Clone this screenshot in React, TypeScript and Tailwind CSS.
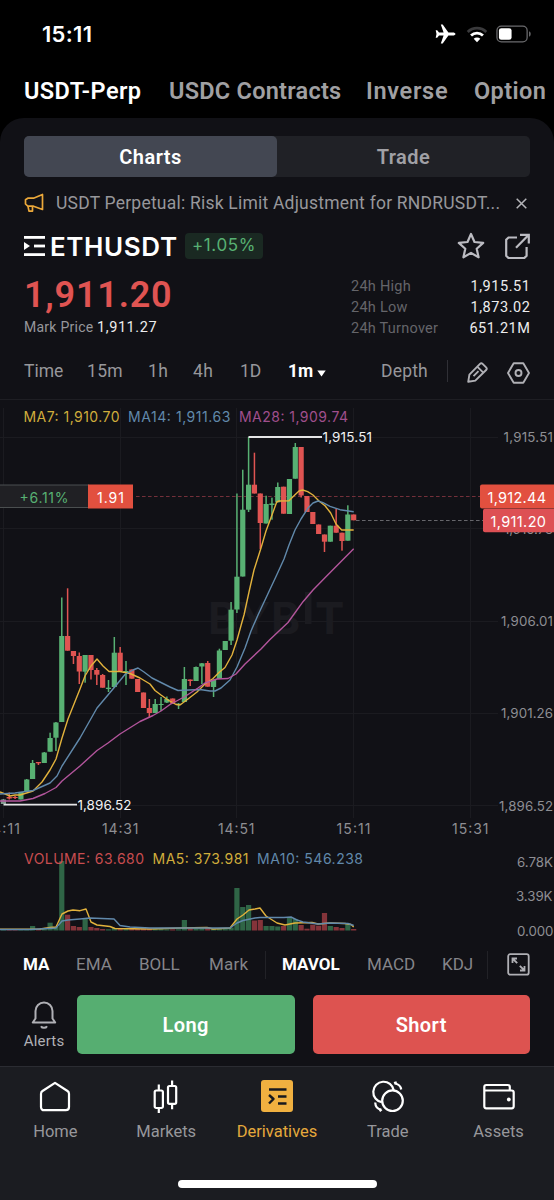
import React from 'react';
import clsx from 'clsx';

const GREEN = '#58b173';
const RED = '#e05452';
const YELLOW = '#e2b23c';
const BLUE = '#6189ab';
const PURPLE = '#b3559c';

// [open side, wick high, body top, body bottom, wick low, volume top]
type Candle = ['u' | 'd', number, number, number, number, number];

const candles: Candle[] = [
  ['u', 799, 799.5, 804, 804, 929.5],
  ['d', 792.5, 797, 798.5, 799.5, 929.5],
  ['d', 796, 797, 798, 799, 929.5],
  ['u', 792, 792, 799.5, 799.5, 929],
  ['u', 779, 779.5, 792, 792, 929],
  ['u', 760, 763, 779, 779, 926],
  ['d', 762, 762, 763.3, 765, 929],
  ['u', 752, 752.5, 763, 763, 928.5],
  ['u', 732.7, 738, 751.7, 751.7, 922.7],
  ['u', 722, 722.5, 737.7, 751, 927],
  ['u', 597.5, 636, 722, 722, 861],
  ['d', 588.3, 636, 650.7, 650.7, 914.7],
  ['d', 651, 651, 656, 664, 926],
  ['d', 652.5, 656, 671.5, 684, 927],
  ['u', 655, 655, 671.7, 682.7, 918.7],
  ['d', 655, 655, 670, 679.5, 927],
  ['d', 668, 670, 674.7, 685, 928],
  ['d', 674, 675, 687.7, 687.7, 929],
  ['u', 680, 687.7, 689, 692, 929.3],
  ['u', 637, 652.7, 687, 688, 928],
  ['d', 647, 652.7, 671, 671, 929],
  ['u', 661, 671, 672.7, 685, 929],
  ['d', 669.5, 669.5, 678.7, 678.7, 929],
  ['d', 679, 679, 692, 692, 929],
  ['d', 692.5, 692.5, 708, 708, 928.5],
  ['d', 699, 708, 713, 717.5, 928.7],
  ['u', 699, 704, 713, 713, 929],
  ['u', 697, 704, 705, 711, 929],
  ['u', 696.5, 699, 702.5, 703, 929.3],
  ['d', 698.5, 698.5, 703.7, 703.7, 929.3],
  ['u', 703, 703.7, 705, 709, 929.3],
  ['u', 667, 679, 702, 702, 920],
  ['d', 679.5, 679.5, 681, 686, 928.5],
  ['u', 666.5, 667, 681, 681, 928.5],
  ['u', 663, 663.3, 666.5, 684, 928.5],
  ['d', 661, 663, 686.7, 686.7, 927.5],
  ['u', 679.5, 679.5, 687, 697, 929],
  ['u', 648.7, 650.5, 679, 679, 928.5],
  ['u', 641, 641, 650, 650, 929],
  ['u', 602, 609.7, 640.7, 645, 927.5],
  ['u', 493.5, 576.7, 609.5, 613, 888],
  ['u', 469.7, 509.7, 576.5, 576.5, 907],
  ['u', 437, 484.7, 509.7, 512, 905],
  ['d', 452.7, 484.7, 493.5, 493.5, 920.5],
  ['d', 493.5, 493.5, 523, 549, 920],
  ['u', 495.7, 504, 523.5, 523.5, 926],
  ['u', 497.7, 503.5, 505, 519.7, 926],
  ['u', 482.5, 487, 502.3, 502.3, 926.5],
  ['d', 486.7, 486.7, 513.7, 513.7, 926],
  ['u', 479, 479, 514, 514, 917],
  ['u', 443, 447, 478.7, 478.7, 919],
  ['d', 447, 447, 495.5, 497.5, 925],
  ['d', 496, 496, 512, 512, 928.7],
  ['d', 512, 512, 524, 524, 924.7],
  ['d', 524.5, 524.5, 534, 534, 925.7],
  ['d', 534.5, 534.5, 541.7, 552, 913],
  ['u', 525.7, 525.7, 541.7, 541.7, 926],
  ['d', 509, 525.7, 532.7, 532.7, 927],
  ['d', 532.7, 532.7, 541, 550.7, 928],
  ['u', 505.3, 514.5, 540.7, 540.7, 924],
  ['d', 514.5, 514.5, 520.3, 520.3, 929],
];

const candleX = (i: number) => 3.4 + i * 5.838;

const ma7 =
  '0,792 10,796 15,795 20,795 33,791 42,782 50,770 56,759 62,738 68,719 74,704 80,689 85,676 91,666 97,659 103,666 109,671.5 120,671.5 130,673.5 140,678 150,684 155,690.5 161,695 168,700 176,704.5 180,705 188,699 197,692 205,684 213,678.5 219,672.5 225,667.5 232,655 237,640 242,622 244,615 249,592 254,570 261,548 266,531 272.7,513 276.7,502 279,501 289,500.7 295,494.7 299,491 302.7,490 307.7,491.7 313,495 319,501 325,505.7 330.7,513 336,524 341.7,530 353.7,530';
const ma14 =
  '0,794 15,793 33,790.5 50,783 57,776 62,766 80,738 97,708 113,689 125,674.5 133,670 138,668 144,672 152,678 162,683 170,687 178,690.5 200,689.5 210,691 215,691 221,688 230,680 237,667 245,648 251,631 258,615 276.7,575 284,559 289,545 295,530 301,519 308,508 313,503 318,501 323,502.7 330,506.3 340,509.7 353.7,511.7';
const ma28 =
  '0,801 20,801 33,798.5 45,793.5 56,787.5 62,781 80,766 97,750.5 108,743 120,734 140,721.5 153,715.5 161,711 170,704.5 185,696.5 198,688 205,683 217,679 228,678.5 236,674 245,664 261,649 270,639.5 288,622.5 303,601.7 313,590 326.7,576 353.7,548.7';
const volMa5 =
  '0,929.3 40,929 50,927.5 56,927 62,914 68,911 73,910 80,910.7 86,909 91,922 97,925 110,926.5 115,928.5 150,929 180,928 207,927.5 213,929 230,928 237,919 243,915 249,910 255,909 260,908 266,916 277,923 285,925 295,923 312,922.5 318,924 330,923 345,923.5 351,924.5 353.7,927';
const volMa10 =
  '0,929.5 30,929.5 56,928 62,921 68,920 80,919 90,918 114,919 120,925.5 130,927 150,928 230,928 237,923 243,920.5 255,918 260,917.5 284,917.5 291,917 297,920 303,922 318,924 330,923 348,923.5 353.7,925.5';

interface LabelProps {
  x: number;
  y: number;
  w: number;
  size?: number;
  fill?: string;
  children: string;
}

function Label({ x, y, w, size = 14, fill = '#8e8e93', children }: LabelProps) {
  return (
    <text x={x} y={y} textLength={w} fontSize={size} fill={fill}>
      {children}
    </text>
  );
}

function PriceChart() {
  return (
    <svg
      viewBox="0 400 554 540"
      className="block h-[540px] w-full font-['Inter',sans-serif]"
    >
      {/* grid */}
      <g stroke="#1b1b20" strokeWidth="1">
        {[3.5, 120.5, 236.5, 353.5, 470.5].map(x => (
          <line key={x} x1={x} x2={x} y1="408" y2="818" />
        ))}
        {[437.5, 528.5, 621.5, 713.5, 805.5].map(y => (
          <line key={y} x1="0" x2="498" y1={y} y2={y} />
        ))}
      </g>

      {/* watermark */}
      <g fill="#1b1b20" fontWeight="700" fontSize="44">
        <text x="208" y="634" textLength="92">
          BYB
        </text>
        <rect x="305" y="592" width="6.5" height="32" />
        <text x="315" y="634" textLength="28">
          T
        </text>
      </g>

      {/* price lines */}
      <line x1="136" x2="480" y1="496.5" y2="496.5" stroke="#74303a" strokeDasharray="3.6 2.4" />
      <line x1="356" x2="484" y1="520.5" y2="520.5" stroke="#66666b" strokeDasharray="3.6 2.4" />

      {/* volume bars */}
      {candles.map(([side, , , , , top], i) => (
        <rect
          key={i}
          x={candleX(i) - 2.6}
          y={top}
          width="5.2"
          height={930.5 - top}
          fill={side === 'u' ? '#2f6546' : '#84343a'}
        />
      ))}

      {/* candles */}
      {candles.map(([side, high, top, bottom, low], i) => (
        <g key={i} fill={i === 0 ? '#7f9a8d' : side === 'u' ? GREEN : RED}>
          <rect x={candleX(i) - 0.75} y={high} width="1.5" height={low - high} />
          <rect x={candleX(i) - 2.6} y={top} width="5.2" height={bottom - top} />
        </g>
      ))}

      <g fill="none" strokeWidth="1.4" strokeLinejoin="round">
        <polyline points={ma7} stroke={YELLOW} />
        <polyline points={ma14} stroke={BLUE} />
        <polyline points={ma28} stroke={PURPLE} />
        <polyline points={volMa5} stroke={YELLOW} />
        <polyline points={volMa10} stroke={BLUE} />
      </g>

      {/* high and low markers */}
      <line x1="248.5" x2="322" y1="437" y2="437" stroke="#e4e4e6" strokeWidth="1.8" />
      <line x1="3.5" x2="77" y1="804.7" y2="804.7" stroke="#e4e4e6" strokeWidth="1.8" />
      <Label x={322.5} y={442.4} w={49.5} size={13.5} fill="#f2f2f3">1,915.51</Label>
      <Label x={77.5} y={810.4} w={54} size={13.5} fill="#f2f2f3">1,896.52</Label>

      <Label x={23.5} y={422.3} w={96} fill="#d0ad3c">MA7: 1,910.70</Label>
      <Label x={128} y={422.3} w={102.5} fill={BLUE}>MA14: 1,911.63</Label>
      <Label x={239} y={422.3} w={109} fill="#a04f8d">MA28: 1,909.74</Label>
      <Label x={24} y={864.2} w={120} fill="#c84d50">VOLUME: 63.680</Label>
      <Label x={152.5} y={864.2} w={96} fill="#d0ad3c">MA5: 373.981</Label>
      <Label x={257} y={864.2} w={106} fill={BLUE}>MA10: 546.238</Label>

      <Label x={503.5} y={442.3} w={49.5} size={13.3}>1,915.51</Label>
      <Label x={504} y={534} w={49} size={13.3}>1,910.76</Label>
      <Label x={501} y={626.3} w={52} size={13.3}>1,906.01</Label>
      <Label x={501} y={718.3} w={52} size={13.3}>1,901.26</Label>
      <Label x={499} y={810.5} w={54} size={13.3}>1,896.52</Label>
      <Label x={517} y={866.6} w={36} size={13.3}>6.78K</Label>
      <Label x={516} y={901.3} w={36.5} size={13.3}>3.39K</Label>
      <Label x={517} y={936} w={36.5} size={13.3}>0.000</Label>

      <Label x={-15} y={834.3} w={35}>14:11</Label>
      <Label x={102} y={834.3} w={36.5}>14:31</Label>
      <Label x={218} y={834.3} w={36.5}>14:51</Label>
      <Label x={336.5} y={834.3} w={34}>15:11</Label>
      <Label x={452} y={834.3} w={36.5}>15:31</Label>

      {/* position tags */}
      <rect x="-1" y="485" width="89.5" height="22.5" fill="#202024" stroke="#4b4f50" />
      <Label x={19.5} y={502.6} w={49} fill={GREEN}>+6.11%</Label>
      <rect x="88" y="484.5" width="45" height="24" fill="#e2503f" />
      <Label x={97} y={502.6} w={27} fill="#ffffff">1.91</Label>
      <rect x="480" y="484.5" width="78" height="24" rx="2" fill="#e2503f" />
      <Label x={487.5} y={502.8} w={58.5} size={14.5} fill="#ffffff">1,912.44</Label>
      <rect x="483" y="508.8" width="75" height="23.4" rx="2" fill="#dd5054" />
      <Label x={490.5} y={526.8} w={55.5} size={14.5} fill="#ffffff">1,911.20</Label>
    </svg>
  );
}

function StatusBar() {
  return (
    <div className="flex h-[68px] items-center justify-between pr-[22px] pl-[42px] text-white">
      <span className="font-['Inter',sans-serif] text-[22px] font-semibold tracking-[0.3px]">15:11</span>
      <div className="flex items-center">
        <svg width="21" height="20" viewBox="0 0 21 20" fill="currentColor">
          <path d="M20.5 10c0-.9-1.200-1.500-2.800-1.500h-4.300L7.700.6H5.800l2.800 7.900H4L2.200 6.200H.7L1.500 10 .7 13.800h1.500L4 11.500h4.600l-2.800 7.900h1.900l5.700-7.900h4.300c1.600 0 2.800-.6 2.800-1.500z" />
        </svg>
        <svg className="ml-[10px]" width="22" height="17" viewBox="0 0 23 18" fill="none">
          <path d="M1.700 6.300a14 14 0 0 1 19.600 0" stroke="#3a3a3c" strokeWidth="3" />
          <path d="M5.200 10a9 9 0 0 1 12.600 0" stroke="#fff" strokeWidth="2.900" />
          <path d="M11.500 17.300l3.500-3.700a5 5 0 0 0-7 0z" fill="#fff" />
        </svg>
        <svg className="ml-[8px]" width="36" height="18" viewBox="0 0 37 18">
          <rect x="1" y="1" width="31" height="16" rx="4.500" fill="none" stroke="#6b6b6e" strokeWidth="1.300" />
          <rect x="3" y="3" width="13" height="12" rx="2.500" fill="#fff" />
          <path d="M34 6.200c2.200.8 2.200 4.800 0 5.600z" fill="#6b6b6e" />
        </svg>
      </div>
    </div>
  );
}

function MarketTabs() {
  return (
    <div className="flex h-[50px] items-center overflow-hidden pb-[3px] pl-6 text-[23.500px] font-semibold tracking-[0.4px] whitespace-nowrap text-[#a0a0a3]">
      <span className="w-[145px] shrink-0 text-white">USDT-Perp</span>
      <span className="w-[197px] shrink-0 tracking-[0.25px]">USDC Contracts</span>
      <span className="w-[108px] shrink-0 tracking-[0.7px]">Inverse</span>
      <span className="shrink-0">Option</span>
    </div>
  );
}

function Notice() {
  return (
    <div className="flex h-[52px] items-center pr-[27px] pl-6">
      <svg width="20" height="20" viewBox="0 0 20 20" fill="none" stroke="#eba83a" strokeWidth="1.700" strokeLinejoin="round">
        <path d="M18.500 1.500v15L9.500 13.200H3.800L1.500 11V6.800l2.300-1.600h5.700z" />
        <path d="M4 13.300l1 4.800h3.500v-5" />
      </svg>
      <span className="ml-3 grow text-[17.500px] tracking-[0.22px] whitespace-nowrap text-[#97979b]">
        USDT Perpetual: Risk Limit Adjustment for RNDRUSDT...
      </span>
      <svg width="11" height="11" viewBox="0 0 11 11" stroke="#b5b5b9" strokeWidth="1.500">
        <path d="M.7.7l9.600 9.600M10.300.7L.7 10.300" />
      </svg>
    </div>
  );
}

function SymbolRow() {
  return (
    <div className="flex h-[34px] items-center px-6">
      <svg width="21" height="20" viewBox="0 0 21 20" fill="#fff">
        <rect width="21" height="2.800" />
        <rect x="10" y="8.600" width="11" height="2.800" />
        <rect y="17.200" width="21" height="2.800" />
        <path d="M0 6l6 4-6 4z" />
      </svg>
      <h1 className="ml-[5px] w-[135px] pt-px font-['Inter',sans-serif] text-[26px] font-semibold tracking-[0.6px] text-white">
        ETHUSDT
      </h1>
      <span className="flex h-[26px] w-[78px] items-center justify-center rounded bg-[#1a2922] font-['Inter',sans-serif] text-[17px] tracking-[0.6px] text-[#58b173]">
        +1.05%
      </span>
      <div className="ml-auto flex items-center gap-5">
        <svg width="28" height="28" viewBox="0 0 28 28" fill="none" stroke="#bcbcc2" strokeWidth="2.200" strokeLinejoin="round">
          <path d="M14 2l3.500 8 8.700.9-6.500 5.800 1.900 8.600L14 20.900l-7.600 4.400 1.900-8.600-6.500-5.800 8.700-.9z" />
        </svg>
        <svg width="25" height="26" viewBox="0 0 25 26" fill="none" stroke="#bcbcc2" strokeWidth="2.200">
          <path d="M12 4.500H3.500L1.200 6.800v15.900L3.500 25h15.800l2.300-2.300V14" />
          <path d="M15 1.800h8.800v8.700M23.300 2.300L11 14.800" />
        </svg>
      </div>
    </div>
  );
}

const stats = [
  ['24h High', '1,915.51'],
  ['24h Low', '1,873.02'],
  ['24h Turnover', '651.21M'],
];

function PriceSummary() {
  return (
    <div className="flex h-[79px] justify-between px-6">
      <div className="pt-[10px]">
        <div className="h-[44px] text-[36px] leading-[44px] font-semibold tracking-[0.8px] text-[#e05452]">1,911.20</div>
        <div className="text-[14px] leading-[21px] tracking-[0.25px] text-[#97979b]">
          Mark Price <span className="text-[14.500px] tracking-[0.55px] text-[#ededee]">1,911.27</span>
        </div>
      </div>
      <dl className="w-[179px] pt-[13px] text-[14.500px] leading-[21px]">
        {stats.map(([name, value]) => (
          <div key={name} className="flex justify-between">
            <dt className="tracking-[0.25px] text-[#65656a]">{name}</dt>
            <dd className="-mr-[0.5px] tracking-[0.55px] text-[#ededee]">{value}</dd>
          </div>
        ))}
      </dl>
    </div>
  );
}

function IntervalBar() {
  return (
    <div className="flex h-[58px] items-center border-b border-[#1e1e23] pt-px pl-6 text-[17.500px] text-[#97979b]">
      <span className="w-[63px]">Time</span>
      <span className="w-[61px] tracking-[0.3px]">15m</span>
      <span className="w-[45px] tracking-[0.3px]">1h</span>
      <span className="w-[47px] tracking-[0.3px]">4h</span>
      <span className="w-[48px]">1D</span>
      <span className="flex w-[93px] items-center font-bold text-white">
        1m
        <svg className="mt-1 ml-1" width="9" height="7" viewBox="0 0 9 7" fill="#fff">
          <path d="M.3.5h8.400L4.500 6.500z" />
        </svg>
      </span>
      <span className="w-[66px] tracking-[0.2px]">Depth</span>
      <span className="h-[22px] w-px bg-[#303036]" />
      <svg className="mt-[3px] ml-[19px]" width="21" height="21" viewBox="0 0 21 21" fill="none" stroke="#b0b0b5" strokeWidth="1.900" strokeLinejoin="round">
        <path d="M1.200 19.800l1.200-7.100L13 1.900c.8-.8 1.800-.8 2.600 0l3.500 3.500c.8.8.8 1.800 0 2.600L8.300 18.600z" />
        <path d="M10.500 4.800l5.800 5.800M6.500 14.200l5-5" />
      </svg>
      <svg className="mt-[3px] ml-[19px]" width="23" height="22" viewBox="0 0 23 22" fill="none" stroke="#b0b0b5" strokeWidth="1.900" strokeLinejoin="round">
        <path d="M6.700 1.200h9.600L22 11l-5.700 9.800H6.700L1 11z" />
        <circle cx="11.500" cy="11" r="3" />
      </svg>
    </div>
  );
}

function IndicatorBar() {
  return (
    <div className="flex h-[48px] items-center pt-px pl-[23px] text-[17px] text-[#85858a]">
      <span className="w-[53px] font-bold text-white">MA</span>
      <span className="w-[63px]">EMA</span>
      <span className="w-[70px]">BOLL</span>
      <span className="w-[56px] tracking-[0.2px]">Mark</span>
      <span className="h-[28px] w-px bg-[#222227]" />
      <span className="ml-[16px] w-[85px] font-bold text-white">MAVOL</span>
      <span className="w-[75px]">MACD</span>
      <span className="w-[45px]">KDJ</span>
      <span className="h-[28px] w-px bg-[#222227]" />
      <svg className="ml-[19px]" width="23" height="23" viewBox="0 0 23 23" fill="none" stroke="#b0b0b5" strokeWidth="1.800">
        <rect x="1.200" y="1.200" width="20.500" height="20.500" rx="2" />
        <path d="M5.500 10V5.500H10M5.500 5.500l4.700 4.700M17.500 13v4.500H13M17.500 17.500l-4.700-4.700" />
      </svg>
    </div>
  );
}

function ActionBar() {
  return (
    <div className="flex h-[78px] pt-[7px] pr-6 pl-[20px]">
      <div className="flex w-[48px] flex-col items-center pt-[6px] text-[15px] text-[#b0b0b5]">
        <svg width="26" height="29" viewBox="0 0 26 29" fill="none" stroke="#b0b0b5" strokeWidth="2" strokeLinejoin="round">
          <path d="M1.800 21.500h22.400l-2.700-4V10a8.500 8.500 0 0 0-17 0v7.500z" />
          <path d="M10 25.200c1.200 2.200 4.800 2.200 6 0" />
        </svg>
        <span className="leading-[22px] tracking-[0.2px]">Alerts</span>
      </div>
      <div className="ml-[9px] grid h-[59px] grow grid-cols-2 gap-[18px] text-[20px] font-semibold tracking-[0.4px] text-white">
        <button className="rounded-[5px] bg-[#56ae71]">Long</button>
        <button className="rounded-[5px] bg-[#dd5350]">Short</button>
      </div>
    </div>
  );
}

const navItems = [
  {
    name: 'Home',
    icon: <path d="M16 2.800L28.500 11c1 .7 1.500 1.500 1.500 2.700V27c0 2-1.200 3.200-3.200 3.200H5.200C3.200 30.200 2 29 2 27V13.700c0-1.200.5-2 1.500-2.700z" />,
  },
  {
    name: 'Markets',
    icon: (
      <path d="M6.200 10.500h5.200a1.500 1.500 0 0 1 1.500 1.500v14.500a1.500 1.500 0 0 1-1.500 1.500H6.200a1.500 1.500 0 0 1-1.500-1.500V12a1.500 1.500 0 0 1 1.500-1.500zM8.800 4.500v6M8.800 28v5M19.500 6h5.200a1.500 1.500 0 0 1 1.500 1.500v14.800a1.500 1.500 0 0 1-1.500 1.500h-5.200a1.500 1.500 0 0 1-1.500-1.500V7.500A1.500 1.500 0 0 1 19.500 6zM22.100.5V6M22.100 23.800v5.500" />
    ),
  },
  {
    name: 'Derivatives',
    icon: (
      <>
        <rect x="0" y="0" width="32" height="32" rx="3" fill="#f0b040" stroke="none" />
        <path d="M8 9.500h17.500M17 16.500h8.500M17 23.500h8.500M8 15l4.500 4-4.500 4.500" stroke="#17181e" strokeWidth="2.400" />
      </>
    ),
  },
  {
    name: 'Trade',
    icon: (
      <>
        <path d="M9.800 22.200a10.300 10.300 0 1 1 11.900-12" />
        <circle cx="20.500" cy="20.700" r="10.300" />
        <path d="M22.500 3.500c4 .5 6.200 2.300 6.700 6M22 3l2.700-.8M3.200 22.500c.2 4 2.200 6.500 6 7.200M9.700 29.500l-2.200 1.700" />
      </>
    ),
  },
  {
    name: 'Assets',
    icon: (
      <>
        <path d="M1.300 10.500v15.800c0 1.300.7 2 2 2h25.400c1.300 0 2-.7 2-2V12.500c0-1.300-.7-2-2-2zM1.300 10.500V7c0-1.300.7-2 2-2h21.500c1.300 0 2 .7 2 2v3.500" />
        <circle cx="25.800" cy="19.500" r="1.900" fill="currentColor" stroke="none" />
      </>
    ),
  },
];

function BottomNav() {
  return (
    <nav className="h-[134px] border-t border-[#2b2c32] bg-[#1b1c21]">
      <div className="grid h-[113px] grid-cols-5">
        {navItems.map(({ name, icon }) => (
          <div key={name} className="flex flex-col items-center pt-[13px]">
            <svg
              className="overflow-visible text-white"
              width="32"
              height="32"
              viewBox="0 0 32 32"
              fill="none"
              stroke="currentColor"
              strokeWidth="2.2"
              strokeLinejoin="round"
            >
              {icon}
            </svg>
            <span
              className={clsx(
                'mt-[9px] text-[16.500px] leading-[22px]',
                name === 'Derivatives' ? 'text-[#e5a93c]' : 'text-[#97979b]'
              )}
            >
              {name}
            </span>
          </div>
        ))}
      </div>
      <div className="mx-auto h-2 w-[199px] rounded-full bg-white" />
    </nav>
  );
}

export default function App() {
  return (
    <div className="h-[1200px] w-[554px] overflow-hidden bg-black font-['Roboto',sans-serif]">
      <StatusBar />
      <MarketTabs />
      <main className="rounded-t-[24px] bg-[#111116] pt-[18px]">
        <div className="mx-6 grid h-[41px] grid-cols-2 rounded-[5px] bg-[#202126] text-[20px] font-semibold tracking-[0.5px]">
          <div className="flex items-center justify-center rounded-[5px] bg-[#434752] text-white">Charts</div>
          <div className="flex items-center justify-center text-[#a0a0a5]">Trade</div>
        </div>
        <Notice />
        <SymbolRow />
        <PriceSummary />
        <IntervalBar />
        <PriceChart />
        <IndicatorBar />
        <ActionBar />
      </main>
      <BottomNav />
    </div>
  );
}
